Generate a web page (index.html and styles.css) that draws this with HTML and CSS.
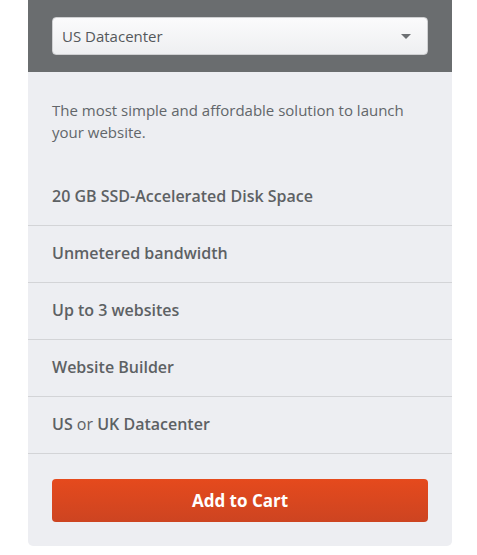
FILE: index.html
```html
<!DOCTYPE html>
<html lang="en">
<head>
    <meta charset="UTF-8">
    <meta name="viewport" content="width=device-width, initial-scale=1.0">
    <title>Hosting Plan</title>
    <link rel="stylesheet" href="styles.css">
</head>
<body>
    <div class="plan-card">
        <div class="plan-head">
            <div class="select-box">
                <span>US Datacenter</span>
                <span class="caret"></span>
            </div>
        </div>
        <div class="plan-body">
            <p class="plan-desc">The most simple and affordable solution to launch your website.</p>
            <ul class="features">
                <li>20 GB SSD-Accelerated Disk Space</li>
                <li>Unmetered bandwidth</li>
                <li>Up to 3 websites</li>
                <li>Website Builder</li>
                <li><span>US <span class="light">or</span> UK Datacenter</span></li>
            </ul>
            <div class="plan-foot">
                <button type="button" class="cart-btn">Add to Cart</button>
            </div>
        </div>
    </div>
</body>
</html>
```

FILE: styles.css
```css
body {
    font-family: "Open Sans", Lato, sans-serif;
    margin: 0;
    padding: 0;
    background-color: #fff;
}
.plan-card {
    width: 424px;
    margin-left: 28px;
    background-color: #edeef2;
    border-radius: 0 0 5px 5px;
    overflow: hidden;
}
.plan-head {
    background-color: #6a6d6f;
    padding: 17px 24px;
}
.select-box {
    display: flex;
    align-items: center;
    justify-content: space-between;
    height: 38px;
    box-sizing: border-box;
    padding: 0 16px 0 9px;
    background: linear-gradient(#fbfbfc, #eeeff1);
    border: 1px solid #cfd0d2;
    border-radius: 4px;
    color: #54585b;
    font-size: 15px;
}
.caret {
    width: 0;
    height: 0;
    border-left: 5px solid transparent;
    border-right: 5px solid transparent;
    border-top: 5px solid #6d7073;
}
.plan-desc {
    margin: 0;
    padding: 27px 24px 26px;
    color: #62666a;
    font-size: 15px;
    line-height: 22px;
}
.features {
    list-style-type: none;
    margin: 0;
    padding: 0;
}
.features li {
    height: 57px;
    box-sizing: border-box;
    display: flex;
    align-items: center;
    padding: 0 24px 2px;
    border-bottom: 1px solid #d3d4d7;
    color: #5d6164;
    font-size: 16px;
    font-weight: 600;
}
.features li .light {
    font-weight: normal;
}
.plan-foot {
    padding: 25px 24px 24px;
}
.cart-btn {
    display: block;
    width: 100%;
    height: 43px;
    border: none;
    border-radius: 4px;
    background: linear-gradient(#e54a1d, #cd4421);
    color: #fff;
    font-family: inherit;
    font-size: 17px;
    font-weight: bold;
    cursor: pointer;
}
```
